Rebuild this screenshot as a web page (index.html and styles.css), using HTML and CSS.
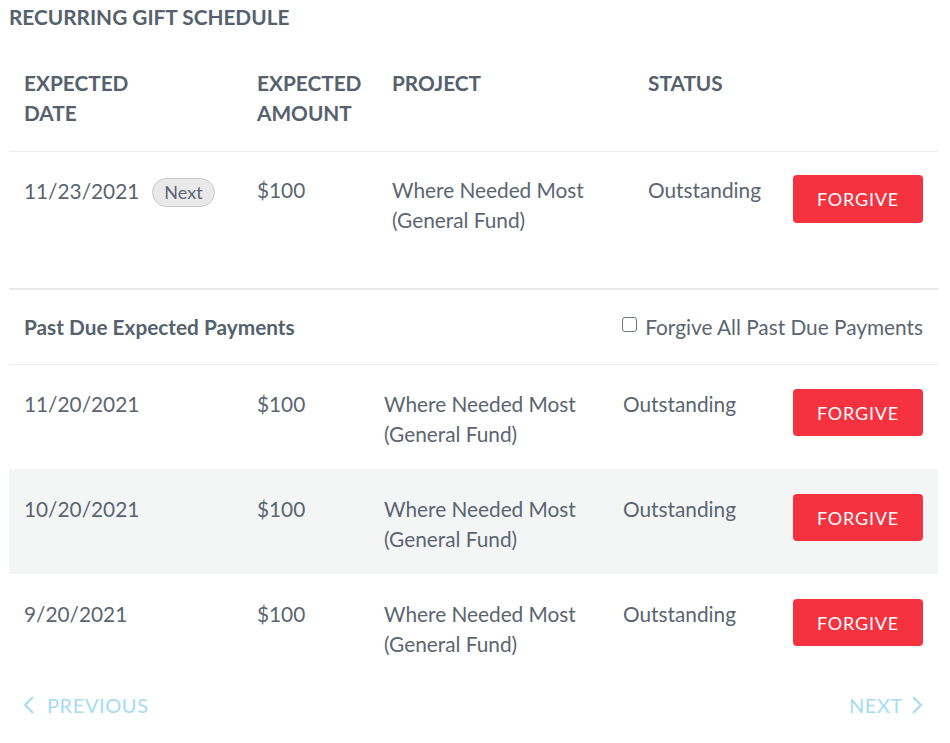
FILE: index.html
```html
<!DOCTYPE html>
<html>
<head>
<meta charset="utf-8">
<link rel="stylesheet" href="styles.css">
</head>
<body>
<div class="page">
  <h2 class="title">Recurring Gift Schedule</h2>

  <div class="row head main-cols">
    <div>Expected<br>Date</div>
    <div>Expected<br>Amount</div>
    <div>Project</div>
    <div>Status</div>
    <div></div>
  </div>

  <div class="row main-cols next-row">
    <div class="date-cell">11/23/2021 <span class="badge">Next</span></div>
    <div>$100</div>
    <div>Where Needed Most<br>(General Fund)</div>
    <div>Outstanding</div>
    <div><button class="btn">Forgive</button></div>
  </div>

  <div class="pastdue-head">
    <div class="pd-title">Past Due Expected Payments</div>
    <label class="check"><span class="box"></span>Forgive All Past Due Payments</label>
  </div>

  <div class="row past-cols">
    <div>11/20/2021</div>
    <div>$100</div>
    <div>Where Needed Most<br>(General Fund)</div>
    <div>Outstanding</div>
    <div><button class="btn">Forgive</button></div>
  </div>
  <div class="row past-cols striped">
    <div>10/20/2021</div>
    <div>$100</div>
    <div>Where Needed Most<br>(General Fund)</div>
    <div>Outstanding</div>
    <div><button class="btn">Forgive</button></div>
  </div>
  <div class="row past-cols">
    <div>9/20/2021</div>
    <div>$100</div>
    <div>Where Needed Most<br>(General Fund)</div>
    <div>Outstanding</div>
    <div><button class="btn">Forgive</button></div>
  </div>

  <div class="pager">
    <a class="pg prev"><svg width="13" height="20" viewBox="0 0 13 20"><path d="M11 2 L3 10 L11 18" fill="none" stroke="currentColor" stroke-width="2.2"/></svg>Previous</a>
    <a class="pg next">Next<svg width="13" height="20" viewBox="0 0 13 20"><path d="M2 2 L10 10 L2 18" fill="none" stroke="currentColor" stroke-width="2.2"/></svg></a>
  </div>
</div>
</body>
</html>
```

FILE: styles.css
```css
html, body {
  margin: 0;
  padding: 0;
  background: #fff;
}
body {
  font-family: Lato, "Open Sans", "Liberation Sans", sans-serif;
  color: #5a6571;
  font-size: 20.8px;
  line-height: 30px;
}
.page {
  width: 929px;
  margin-left: 9px;
}
.title {
  margin: 5px 0 0 0;
  font-size: 20.8px;
  line-height: 24px;
  font-weight: 700;
  text-transform: uppercase;
  color: #55616c;
}
.row {
  display: grid;
  padding: 24px 15px 20px 15px;
  align-items: start;
}
.main-cols {
  grid-template-columns: 233px 135px 256px 145px 130px;
}
.past-cols {
  grid-template-columns: 233px 127px 239px 170px 130px;
  border-top: 1px solid #ececec;
}
.past-cols.striped {
  background: #f4f6f6;
  border-top-color: #f4f6f6;
}
.past-cols.striped + .past-cols {
  border-top-color: #fff;
}
.head {
  padding-top: 39px;
  padding-bottom: 23px;
  font-weight: 700;
  text-transform: uppercase;
  color: #55616c;
  border-bottom: 1px solid #ececec;
}
.next-row {
  padding-top: 23px;
  padding-bottom: 53px;
}
.next-row .btn {
  height: 48px;
}
.date-cell {
  display: flex;
  align-items: center;
  gap: 13px;
}
.badge {
  display: inline-block;
  font-size: 18px;
  line-height: 27px;
  padding: 0 11px;
  background: #e9e9e9;
  border: 1px solid #c9c9c9;
  border-radius: 15px;
  color: #5a6571;
  margin-top: 3px;
}
.btn {
  display: block;
  width: 130px;
  height: 47px;
  border: none;
  border-radius: 4px;
  background: #f5323f;
  color: #fff;
  font-family: Lato, "Open Sans", "Liberation Sans", sans-serif;
  font-size: 18px;
  letter-spacing: 0.8px;
  text-transform: uppercase;
  padding: 0;
  margin-top: 0;
}
.pastdue-head {
  display: flex;
  justify-content: space-between;
  align-items: center;
  border-top: 2px solid #e8eaea;
  padding: 22px 15px 22px 15px;
}
.pd-title {
  font-weight: 700;
  color: #55616c;
}
.check {
  display: flex;
  align-items: center;
  color: #5a6571;
}
.box {
  display: inline-block;
  width: 13px;
  height: 13px;
  border: 1.5px solid #6b737b;
  border-radius: 3px;
  margin-right: 8px;
  margin-top: -5px;
}
.pager {
  display: flex;
  justify-content: space-between;
  padding: 11px 14px 0 13px;
}
.pg {
  display: flex;
  align-items: center;
  color: #a6dcf3;
  text-transform: uppercase;
  letter-spacing: 0.6px;
  font-size: 20px;
}
.prev svg {
  margin-right: 12px;
}
.next svg {
  margin-left: 8px;
}
```
